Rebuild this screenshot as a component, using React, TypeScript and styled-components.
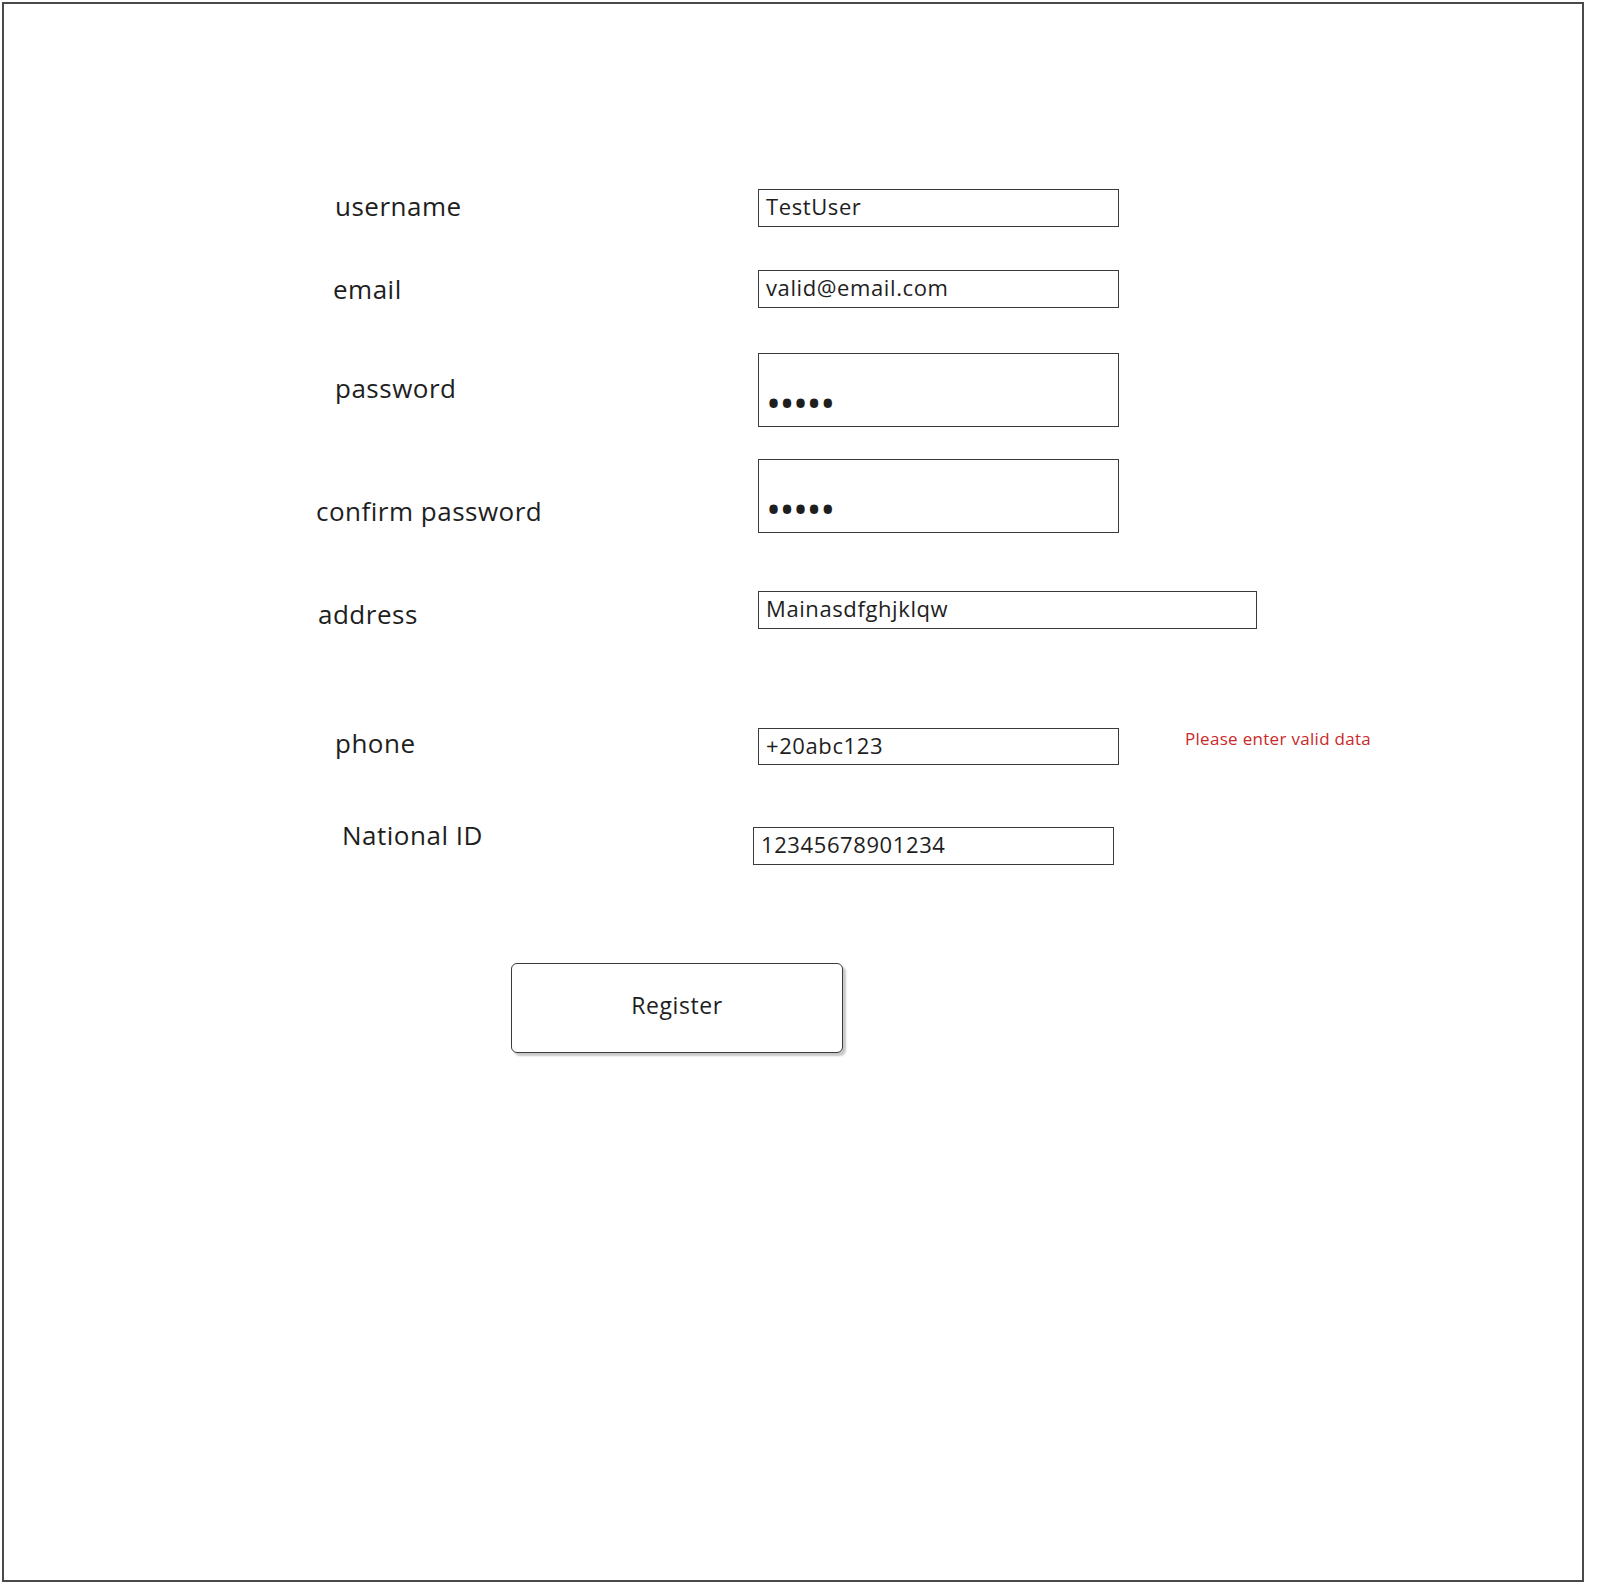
import React from "react";
import styled, { createGlobalStyle } from "styled-components";

const Global = createGlobalStyle`
  html, body { margin: 0; padding: 0; background: #ffffff; }
  body { font-family: "Open Sans", "Noto Sans", sans-serif; color: #1e1e1e; }
`;

const Page = styled.div`
  box-sizing: border-box;
  margin: 2px 0 0 2px;
  width: 1582px;
  height: 1580px;
  border: 2px solid #4a4a4a;
  padding-top: 185px;
  display: flex;
  flex-direction: column;
`;

const Row = styled.div<{ $gap: number }>`
  display: flex;
  align-items: flex-start;
  margin-top: ${(p) => p.$gap}px;
`;

const LabelCell = styled.div`
  width: 754px;
  flex: none;
`;

const Label = styled.div<{ $x: number; $y: number }>`
  margin-left: ${(p) => p.$x}px;
  margin-top: ${(p) => p.$y}px;
  font-size: 26px;
  line-height: 30px;
  letter-spacing: 0.5px;
  color: #1e1e1e;
  white-space: nowrap;
`;

const Field = styled.div<{ $w: number; $h: number; $shift?: number; $pad?: number }>`
  box-sizing: border-box;
  width: ${(p) => p.$w}px;
  height: ${(p) => p.$h}px;
  margin-left: ${(p) => p.$shift ?? 0}px;
  border: 1.6px solid #3a3a3a;
  padding: ${(p) => p.$pad ?? 0}px 0 ${(p) => (p.$pad ? 0 : 4)}px 7px;
  display: flex;
  align-items: ${(p) => (p.$pad ? "flex-start" : "center")};
  font-size: 22px;
  letter-spacing: 0.6px;
  color: #1e1e1e;
  white-space: nowrap;
  flex: none;
`;

const Dots = styled.span`
  font-size: 40px;
  line-height: 30px;
  letter-spacing: -1.5px;
  color: #1e1e1e;
`;

const ErrorText = styled.div`
  margin-left: 66px;
  margin-top: 1px;
  font-size: 17px;
  line-height: 20px;
  letter-spacing: 0.3px;
  color: #c92a2a;
  white-space: nowrap;
`;

const Button = styled.button`
  box-sizing: border-box;
  margin: 98px 0 0 507px;
  width: 332px;
  height: 90px;
  padding: 0 0 6px;
  border: 1.6px solid #3a3a3a;
  border-radius: 6px;
  background: #ffffff;
  box-shadow: 3px 3px 2px rgba(0, 0, 0, 0.22);
  font-family: "Open Sans", "Noto Sans", sans-serif;
  font-size: 23px;
  letter-spacing: 0.6px;
  color: #1e1e1e;
  cursor: pointer;
`;

type RowData = {
  label: string;
  lx: number;
  ly: number;
  gap: number;
  w: number;
  h: number;
  value: string;
  masked?: boolean;
  shift?: number;
  error?: string;
};

const rows: RowData[] = [
  { label: "username", lx: 331, ly: 2, gap: 0, w: 361, h: 38, value: "TestUser" },
  { label: "email", lx: 329, ly: 4, gap: 43, w: 361, h: 38, value: "valid@email.com" },
  { label: "password", lx: 331, ly: 20, gap: 45, w: 361, h: 74, value: "", masked: true },
  { label: "confirm password", lx: 312, ly: 37, gap: 32, w: 361, h: 74, value: "", masked: true },
  { label: "address", lx: 314, ly: 8, gap: 58, w: 499, h: 38, value: "Mainasdfghjklqw" },
  {
    label: "phone",
    lx: 331,
    ly: 0,
    gap: 99,
    w: 361,
    h: 37,
    value: "+20abc123",
    error: "Please enter valid data",
  },
  { label: "National ID", lx: 338, ly: -7, gap: 62, w: 361, h: 38, value: "12345678901234", shift: -5 },
];

export default function App() {
  return (
    <>
      <Global />
      <Page>
        {rows.map((r) => (
          <Row key={r.label} $gap={r.gap}>
            <LabelCell>
              <Label $x={r.lx} $y={r.ly}>
                {r.label}
              </Label>
            </LabelCell>
            <Field $w={r.w} $h={r.h} $shift={r.shift} $pad={r.masked ? 34 : 0}>
              {r.masked ? <Dots>•••••</Dots> : r.value}
            </Field>
            {r.error && <ErrorText>{r.error}</ErrorText>}
          </Row>
        ))}
        <div>
          <Button type="button">Register</Button>
        </div>
      </Page>
    </>
  );
}
